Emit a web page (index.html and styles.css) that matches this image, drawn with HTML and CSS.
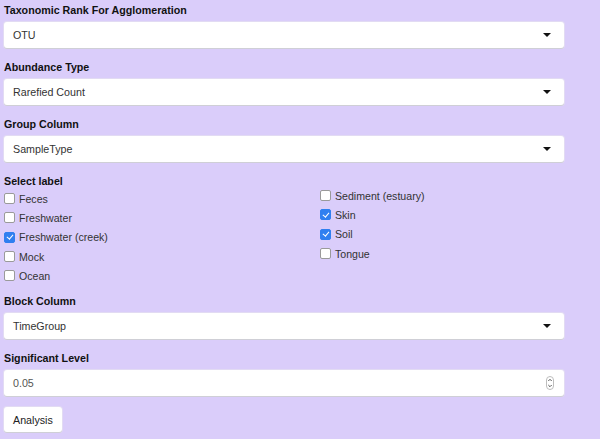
FILE: index.html
```html
<!DOCTYPE html>
<html>
<head>
<meta charset="utf-8">
<link rel="stylesheet" href="styles.css">
</head>
<body>
<div class="page">
  <div class="group">
    <div class="label">Taxonomic Rank For Agglomeration</div>
    <div class="select"><span>OTU</span><i class="caret"></i></div>
  </div>
  <div class="group">
    <div class="label">Abundance Type</div>
    <div class="select"><span>Rarefied Count</span><i class="caret"></i></div>
  </div>
  <div class="group">
    <div class="label">Group Column</div>
    <div class="select"><span>SampleType</span><i class="caret"></i></div>
  </div>
  <div class="group checks-group">
    <div class="label">Select label</div>
    <div class="checks">
      <div class="col col-left">
        <label class="check"><span class="box"></span>Feces</label>
        <label class="check"><span class="box"></span>Freshwater</label>
        <label class="check"><span class="box on"></span>Freshwater (creek)</label>
        <label class="check"><span class="box"></span>Mock</label>
        <label class="check"><span class="box"></span>Ocean</label>
      </div>
      <div class="col col-right">
        <label class="check"><span class="box"></span>Sediment (estuary)</label>
        <label class="check"><span class="box on"></span>Skin</label>
        <label class="check"><span class="box on"></span>Soil</label>
        <label class="check"><span class="box"></span>Tongue</label>
      </div>
    </div>
  </div>
  <div class="group">
    <div class="label">Block Column</div>
    <div class="select"><span>TimeGroup</span><i class="caret"></i></div>
  </div>
  <div class="group">
    <div class="label">Significant Level</div>
    <div class="select number"><span>0.05</span>
      <svg class="spin" width="8" height="14" viewBox="0 0 8 14">
        <rect x="0.5" y="0.5" width="7" height="13" rx="3.5" fill="#fff" stroke="#bdbdbd"/>
        <path d="M2.3 5 L4 3.3 L5.7 5" fill="none" stroke="#555" stroke-width="1"/>
        <path d="M2.3 9 L4 10.7 L5.7 9" fill="none" stroke="#555" stroke-width="1"/>
      </svg>
    </div>
  </div>
  <div class="btn">Analysis</div>
</div>
</body>
</html>
```
FILE: styles.css
```css
html, body {
  margin: 0;
  padding: 0;
  background: #dacdfa;
}
body {
  font-family: "Liberation Sans", Arial, sans-serif;
  color: #333;
  width: 600px;
  height: 439px;
  overflow: hidden;
}
.page {
  padding: 3px 36px 0 4px;
  display: flex;
  flex-direction: column;
}
.group {
  display: flex;
  flex-direction: column;
  margin-bottom: 12px;
}
.label {
  font-size: 10.7px;
  font-weight: bold;
  color: #111;
  line-height: 14px;
  margin-bottom: 5px;
}
.select {
  height: 26px;
  box-sizing: border-box;
  background: #fff;
  border-radius: 3px;
  box-shadow: 0 1px 0 #cfcfd6, 0 0 0 1px #e2dbf3;
  display: flex;
  align-items: center;
  justify-content: space-between;
  padding: 0 13px 0 9px;
  font-size: 10.7px;
  color: #333;
}
.caret {
  width: 0;
  height: 0;
  border-left: 4px solid transparent;
  border-right: 4px solid transparent;
  border-top: 4px solid #111;
}
.number {
  padding-right: 10px;
}
.number span { color: #555; }
.spin { display: block; }
.checks-group { margin-bottom: 9px; }
.checks-group .label { margin-bottom: 1px; }
.checks {
  display: grid;
  grid-template-columns: 316px auto;
}
.col { display: flex; flex-direction: column; }
.col-right { margin-top: -3px; }
.check {
  display: flex;
  align-items: center;
  height: 19.3px;
  font-size: 10.6px;
  color: #333;
}
.box {
  width: 9px;
  height: 9px;
  border: 1px solid #9a9a9a;
  border-radius: 2px;
  background: #fff;
  margin-right: 4px;
  position: relative;
}
.box.on {
  background: #2f7ff0;
  border-color: #2f7ff0;
}
.box.on::after {
  content: "";
  position: absolute;
  left: 2.5px;
  top: 0.5px;
  width: 2.5px;
  height: 5px;
  border-right: 1.5px solid #fff;
  border-bottom: 1.5px solid #fff;
  transform: rotate(40deg);
}
.btn {
  align-self: flex-start;
  height: 25px;
  box-sizing: border-box;
  padding: 0 9px;
  background: #fff;
  border-radius: 3px;
  box-shadow: 0 1px 0 #cfcfd6, 0 0 0 1px #e2dbf3;
  font-size: 10.7px;
  color: #222;
  display: flex;
  align-items: center;
  margin-top: -1px;
}
```
